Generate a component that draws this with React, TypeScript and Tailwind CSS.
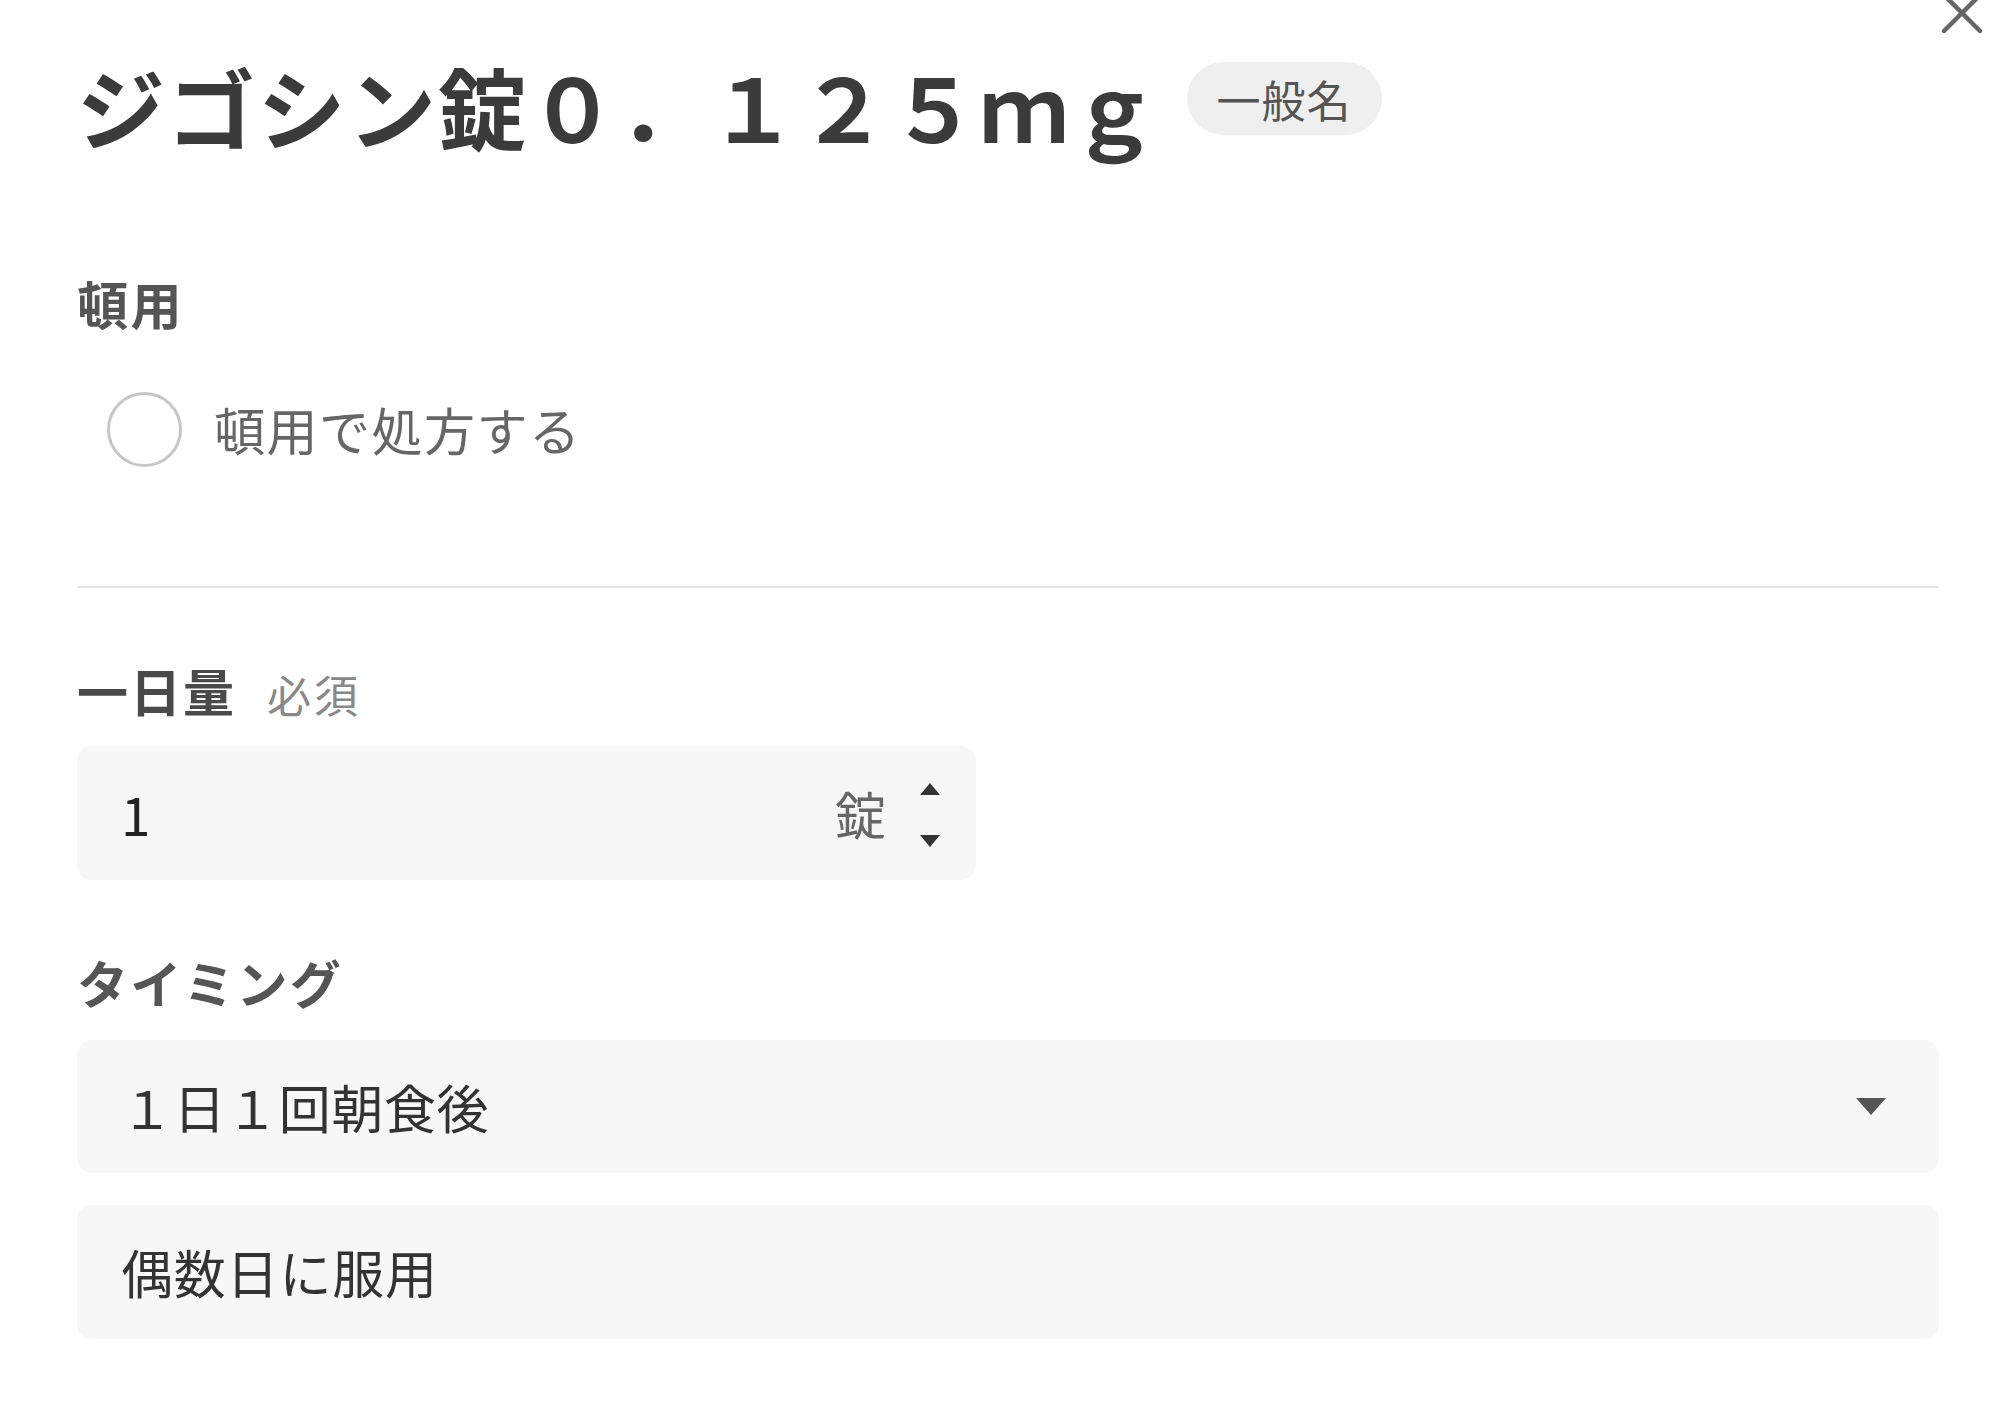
import { useState } from 'react';

const FONT = "font-['Noto_Sans_CJK_JP','Noto_Sans',sans-serif]";

export default function App() {
  const [prn, setPrn] = useState(false);
  const [dose, setDose] = useState(1);

  return (
    <div className={`relative min-h-[1418px] w-full bg-white px-[77px] pr-[61px] ${FONT}`}>
      {/* close */}
      <button className="absolute right-[16px] top-[-9px] h-[44px] w-[44px] text-[#666]">
        <svg viewBox="0 0 44 44" className="h-full w-full">
          <path d="M4 4 L40 40 M40 4 L4 40" stroke="currentColor" strokeWidth="4.5" strokeLinecap="round" />
        </svg>
      </button>

      {/* title */}
      <div className="flex items-start pt-[61px]">
        <h1 className="text-[88px] font-bold leading-none tracking-[2.3px] text-[#3b3b3b]">ジゴシン錠０．１２５ｍｇ</h1>
        <span className="ml-[26px] mt-[1px] flex h-[73px] items-center rounded-full bg-[#efefef] px-[30px] text-[44px] leading-none tracking-[1px] text-[#555]">
          一般名
        </span>
      </div>

      {/* 頓用 */}
      <div className="mt-[129px] text-[51px] font-bold leading-none tracking-[2.5px] text-[#555]">頓用</div>
      <label className="ml-[30px] mt-[63px] flex h-[75px] cursor-pointer items-center gap-[32px]" onClick={() => setPrn(p => !p)}>
        <span className={`h-[75px] w-[75px] shrink-0 rounded-full border-[3px] ${prn ? 'border-[#555]' : 'border-[#c6c6c6]'} flex items-center justify-center`}>
          {prn && <span className="h-[40px] w-[40px] rounded-full bg-[#555]" />}
        </span>
        <span className="text-[51px] leading-none tracking-[1.5px] text-[#666]">頓用で処方する</span>
      </label>

      <div className="mt-[119px] h-[2px] bg-[#e2e2e2]" />

      {/* 一日量 */}
      <div className="mt-[77px] flex items-end gap-[31px] leading-none">
        <span className="text-[51px] font-bold tracking-[2px] text-[#4a4a4a]">一日量</span>
        <span className="text-[44px] tracking-[3px] text-[#888]">必須</span>
      </div>
      <div className="mt-[30px] flex h-[134px] w-[899px] items-center rounded-[15px] bg-[#f7f7f7] pl-[44px] pr-[36px]">
        <span className="flex-1 text-[53px] leading-none text-[#222]">{dose}</span>
        <span className="text-[51px] leading-none text-[#666]">錠</span>
        <div className="ml-[34px] flex flex-col items-center gap-[40px] pt-[4px] text-[#333]">
          <button onClick={() => setDose(d => d + 1)}>
            <svg width="20" height="12" viewBox="0 0 20 12"><polygon points="10,0 20,12 0,12" fill="currentColor" /></svg>
          </button>
          <button onClick={() => setDose(d => Math.max(0, d - 1))}>
            <svg width="20" height="12" viewBox="0 0 20 12"><polygon points="0,0 20,0 10,12" fill="currentColor" /></svg>
          </button>
        </div>
      </div>

      {/* タイミング */}
      <div className="mt-[77px] text-[51px] font-bold leading-none tracking-[2.2px] text-[#555]">タイミング</div>
      <div className="mt-[32px] flex h-[133px] items-center rounded-[15px] bg-[#f7f7f7] pl-[44px] pr-[53px]">
        <span className="flex-1 text-[52px] leading-none tracking-[0.6px] text-[#333]">１日１回朝食後</span>
        <svg width="30" height="17" viewBox="0 0 30 17" className="text-[#555]">
          <polygon points="0,0 30,0 15,17" fill="currentColor" />
        </svg>
      </div>
      <div className="mt-[32px] flex h-[134px] items-center rounded-[15px] bg-[#f7f7f7] pl-[44px]">
        <span className="text-[52px] leading-none tracking-[0.8px] text-[#333]">偶数日に服用</span>
      </div>
    </div>
  );
}
